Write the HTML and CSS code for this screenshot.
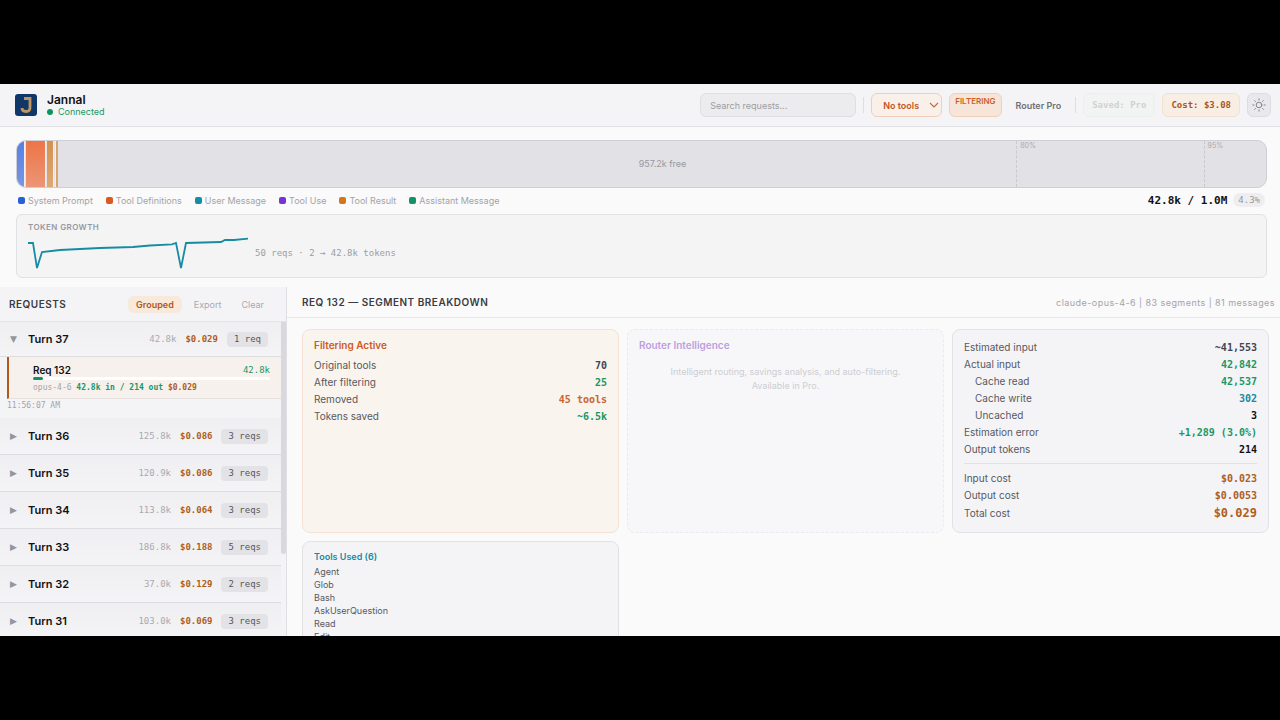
FILE: index.html
```html
<!DOCTYPE html>
<html lang="en">
<head>
  <meta charset="UTF-8" />
  <meta name="viewport" content="width=device-width, initial-scale=1.0"/>
  <title>Jannal</title>
  <link rel="stylesheet" href="styles.css">
</head>
<body>
  <div class="app">
    <header class="topbar">
      <div class="logo">
        <svg width="22" height="22" viewBox="0 0 22 22" aria-hidden="true">
          <rect width="22" height="22" rx="3" fill="#0f3868"/>
          <path d="M9 4.5H15V13.5Q15 17.5 11 17.5Q7 17.5 7 14" fill="none" stroke="#c09560" stroke-width="2.8"/>
        </svg>
      </div>
      <div class="brand">
        <h1>Jannal</h1>
        <div class="status"><span class="dot"></span>Connected</div>
      </div>

      <div class="toolbar">
        <input type="text" class="search" placeholder="Search requests..." aria-label="Search requests" />
        <span class="divider"></span>
        <div class="select-wrap">
          <select class="tool-select" aria-label="Tool filter">
            <option>No tools</option>
          </select>
          <svg class="chevron" width="10" height="6" viewBox="0 0 10 6" aria-hidden="true"><path d="M1 1l4 4 4-4" fill="none" stroke="#c2663c" stroke-width="1.1"/></svg>
        </div>
        <button class="filtering">FILTERING</button>
        <button class="router">Router Pro</button>
        <span class="divider"></span>
        <span class="pill saved">Saved: Pro</span>
        <span class="pill cost">Cost: $3.08</span>
        <button class="theme" aria-label="Toggle theme">
          <svg width="14" height="14" viewBox="0 0 14 14" fill="none" stroke="#85858d" stroke-width="1" stroke-linecap="round">
            <circle cx="7" cy="7" r="2.8"/>
            <path d="M7 .8v1.2M7 12v1.2M.8 7H2M12 7h1.2M2.6 2.6l.9.9M10.5 10.5l.9.9M2.6 11.4l.9-.9M10.5 3.5l.9-.9"/>
          </svg>
        </button>
      </div>
    </header>

    <section class="overview">
      <div class="context-bar">
        <div class="seg seg-system"></div>
        <div class="seg seg-defs"></div>
        <div class="seg seg-result"></div>
        <div class="seg seg-small"></div>
        <div class="free">957.2k free</div>
        <span class="mark mark-80">80%</span>
        <span class="mark mark-95">95%</span>
      </div>

      <div class="legend-row">
        <ul class="legend">
          <li><i class="blue"></i>System Prompt</li>
          <li><i class="orange"></i>Tool Definitions</li>
          <li><i class="teal"></i>User Message</li>
          <li><i class="purple"></i>Tool Use</li>
          <li><i class="amber"></i>Tool Result</li>
          <li><i class="green"></i>Assistant Message</li>
        </ul>
        <div class="usage">42.8k / 1.0M <span class="percent">4.3%</span></div>
      </div>

      <div class="growth">
        <h2>TOKEN GROWTH</h2>
        <div class="growth-row">
          <svg width="220" height="34" viewBox="0 0 220 34" aria-hidden="true">
            <polyline points="0,7 5,7 9,32 14,16 32,14 72,12 105,11 122,9.5 144,8.3 148,7 153,32 158,7 193,6 197,4 206,4 220,2.7" fill="none" stroke="#178ba3" stroke-width="1.8"/>
          </svg>
          <span>50 reqs · 2 → 42.8k tokens</span>
        </div>
      </div>
    </section>

    <main class="main">
      <aside class="sidebar">
        <div class="sidebar-head">
          <h2>REQUESTS</h2>
          <button class="tab active">Grouped</button>
          <button class="tab">Export</button>
          <button class="tab">Clear</button>
        </div>
        <div class="scroller">
          <div class="turns">
            <div class="turn open">
              <span class="arrow">▼</span><span class="name">Turn 37</span>
              <span class="tokens">42.8k</span><span class="price">$0.029</span><span class="count">1 req</span>
            </div>
            <div class="req">
              <div class="req-top"><span>Req 132</span><span class="req-tokens">42.8k</span></div>
              <div class="meter"><div class="meter-fill"></div></div>
              <div class="req-meta">opus-4-6 <b class="green-text">42.8k in / 214 out</b> <b class="cost-text">$0.029</b></div>
            </div>
            <div class="time">11:56:07 AM</div>
            <div class="turn">
              <span class="arrow">▶</span><span class="name">Turn 36</span>
              <span class="tokens">125.8k</span><span class="price">$0.086</span><span class="count">3 reqs</span>
            </div>
            <div class="turn">
              <span class="arrow">▶</span><span class="name">Turn 35</span>
              <span class="tokens">120.9k</span><span class="price">$0.086</span><span class="count">3 reqs</span>
            </div>
            <div class="turn">
              <span class="arrow">▶</span><span class="name">Turn 34</span>
              <span class="tokens">113.8k</span><span class="price">$0.064</span><span class="count">3 reqs</span>
            </div>
            <div class="turn">
              <span class="arrow">▶</span><span class="name">Turn 33</span>
              <span class="tokens">186.8k</span><span class="price">$0.188</span><span class="count">5 reqs</span>
            </div>
            <div class="turn">
              <span class="arrow">▶</span><span class="name">Turn 32</span>
              <span class="tokens">37.0k</span><span class="price">$0.129</span><span class="count">2 reqs</span>
            </div>
            <div class="turn">
              <span class="arrow">▶</span><span class="name">Turn 31</span>
              <span class="tokens">103.0k</span><span class="price">$0.069</span><span class="count">3 reqs</span>
            </div>
          </div>
          <div class="scrollbar"><div class="thumb"></div></div>
        </div>
      </aside>

      <section class="detail">
        <div class="detail-head">
          <h2>REQ 132 — SEGMENT BREAKDOWN</h2>
          <span>claude-opus-4-6 | 83 segments | 81 messages</span>
        </div>
        <div class="cards">
          <div class="card card-filter">
            <h3>Filtering Active</h3>
            <dl>
              <div><dt>Original tools</dt><dd class="gray-text">70</dd></div>
              <div><dt>After filtering</dt><dd class="green-text">25</dd></div>
              <div><dt>Removed</dt><dd class="orange-text">45 tools</dd></div>
              <div><dt>Tokens saved</dt><dd class="green-text">~6.5k</dd></div>
            </dl>
          </div>

          <div class="card card-router">
            <h3>Router Intelligence</h3>
            <p>Intelligent routing, savings analysis, and auto-filtering.<br>Available in Pro.</p>
          </div>

          <div class="card card-stats">
            <dl>
              <div><dt>Estimated input</dt><dd class="gray-text">~41,553</dd></div>
              <div><dt>Actual input</dt><dd class="green-text">42,842</dd></div>
              <div class="sub"><dt>Cache read</dt><dd class="green-text">42,537</dd></div>
              <div class="sub"><dt>Cache write</dt><dd class="teal-text">302</dd></div>
              <div class="sub"><dt>Uncached</dt><dd>3</dd></div>
              <div><dt>Estimation error</dt><dd class="green-text">+1,289 (3.0%)</dd></div>
              <div><dt>Output tokens</dt><dd>214</dd></div>
            </dl>
            <dl class="costs">
              <div><dt>Input cost</dt><dd class="cost-text">$0.023</dd></div>
              <div><dt>Output cost</dt><dd class="cost-text">$0.0053</dd></div>
              <div class="total"><dt>Total cost</dt><dd class="cost-text">$0.029</dd></div>
            </dl>
          </div>

          <div class="card card-tools">
            <h3>Tools Used (6)</h3>
            <ul>
              <li>Agent</li>
              <li>Glob</li>
              <li>Bash</li>
              <li>AskUserQuestion</li>
              <li>Read</li>
              <li>Edit</li>
            </ul>
          </div>
        </div>
      </section>
    </main>
  </div>
</body>
</html>
```
FILE: styles.css
```css
* {
  box-sizing: border-box;
}

body {
  margin: 0;
  height: 100vh;
  padding: 84px 0;
  background: #000;
  font-family: Inter, "Liberation Sans", sans-serif;
  font-size: 10px;
  color: #111114;
}

h1, h2, h3, p, ul, dl, dd {
  margin: 0;
  padding: 0;
}

ul {
  list-style: none;
}

button, input, select {
  font-family: inherit;
  font-size: 9px;
}

.app {
  height: 100%;
  display: flex;
  flex-direction: column;
  overflow: hidden;
  background: #fafafb;
}

/* top bar */
.topbar {
  display: flex;
  align-items: center;
  flex-shrink: 0;
  height: 43px;
  padding: 0 9px 0 15px;
  background: #f4f4f6;
  border-bottom: 1px solid #e1e0e4;
}

.logo {
  height: 22px;
}

.brand {
  margin-left: 10px;
}

.brand h1 {
  font-size: 12px;
  line-height: 14px;
  font-weight: 600;
}

.status {
  display: flex;
  align-items: center;
  gap: 5px;
  font-size: 9px;
  line-height: 10px;
  color: #1b9765;
}

.dot {
  width: 6px;
  height: 6px;
  border-radius: 50%;
  background: #0d9465;
}

.toolbar {
  display: flex;
  align-items: center;
  gap: 7px;
  margin-left: auto;
}

.search {
  width: 156px;
  height: 24px;
  padding: 0 9px;
  border: 1px solid #dfdfe3;
  border-radius: 6px;
  background: #ececee;
}

.search::placeholder {
  color: #9d9da3;
}

.divider {
  width: 1px;
  height: 16px;
  background: #dedee2;
}

.select-wrap {
  position: relative;
  height: 24px;
}

.tool-select {
  appearance: none;
  width: 71px;
  height: 24px;
  padding: 0 11px;
  border: 1px solid #efcfb9;
  border-radius: 6px;
  background: #f9f0e9;
  color: #c2551f;
  font-weight: 600;
}

.chevron {
  position: absolute;
  right: 3px;
  top: 9px;
  pointer-events: none;
}

.filtering {
  display: flex;
  align-items: flex-start;
  height: 24px;
  padding: 2px 5px;
  border: 1px solid #efd0bd;
  border-radius: 6px;
  background: #f8e5da;
  color: #cc5f29;
  font-size: 8px;
  line-height: 10px;
  font-weight: 600;
}

.router {
  padding: 0 7px;
  border: 0;
  background: none;
  color: #6f6f76;
  font-weight: 600;
}

.pill {
  height: 24px;
  padding: 0 8px;
  border: 1px solid;
  border-radius: 6px;
  font: bold 9px/22px "DejaVu Sans Mono", monospace;
}

.saved {
  border-color: #ebefed;
  background: #f1f4f3;
  color: #cfd2d1;
}

.cost {
  border-color: #f1e1d0;
  background: #f8eee4;
  color: #a9551c;
}

.theme {
  display: flex;
  align-items: center;
  justify-content: center;
  width: 24px;
  height: 24px;
  padding: 0;
  border: 1px solid #dcdce1;
  border-radius: 6px;
  background: #e9e9ed;
}

/* context window usage */
.overview {
  flex-shrink: 0;
  padding: 13px 13px 9px 16px;
}

.context-bar {
  position: relative;
  display: flex;
  gap: 1px;
  height: 48px;
  border: 1px solid #cfced4;
  border-radius: 10px;
  overflow: hidden;
  background: #e2e1e6;
}

.seg {
  flex-shrink: 0;
  border-right: 1px solid #f4eeee;
}

.seg-system {
  width: 8px;
  background: linear-gradient(#5580e2, #7997e2);
}

.seg-defs {
  width: 20px;
  background: linear-gradient(#ec7547, #ec9576);
}

.seg-result {
  width: 7px;
  background: linear-gradient(#d59050, #dfa974);
}

.seg-small {
  width: 3px;
  border: 0;
  border-left: 1px solid #f4eeee;
  background: #dca36d;
}

.free {
  flex: 1;
  text-align: center;
  font-size: 9px;
  line-height: 46px;
  color: #98989f;
}

.mark {
  position: absolute;
  top: 0;
  bottom: 0;
  padding: 1px 3px;
  border-left: 1px dashed #c9c9ce;
  font-size: 7px;
  line-height: 8px;
  color: #a9a9af;
}

.mark-80 {
  left: 80%;
}

.mark-95 {
  left: 95%;
}

.legend-row {
  display: flex;
  align-items: center;
  justify-content: space-between;
  height: 24px;
  margin-bottom: 2px;
  padding: 0 2px;
}

.legend {
  display: flex;
  gap: 13px;
  font-size: 9px;
  color: #a3a3a9;
}

.legend li {
  display: flex;
  align-items: center;
  gap: 3px;
}

.legend i {
  width: 7px;
  height: 7px;
  border-radius: 2px;
}

.blue { background: #2861d5; }
.orange { background: #d9591f; }
.teal { background: #138ea6; }
.purple { background: #7435d2; }
.amber { background: #cf781c; }
.green { background: #129365; }

.usage {
  display: flex;
  align-items: center;
  gap: 6px;
  font: bold 11px "DejaVu Sans Mono", monospace;
}

.percent {
  padding: 0 5px;
  border-radius: 7px;
  background: #eeeef1;
  font-size: 9px;
  line-height: 14px;
  font-weight: normal;
  color: #97979d;
}

.growth {
  height: 64px;
  padding: 7px 11px;
  border: 1px solid #e1e1e5;
  border-radius: 6px;
  background: #f4f4f5;
}

.growth h2 {
  font-size: 8px;
  line-height: 10px;
  font-weight: 600;
  letter-spacing: 0.05em;
  color: #98989f;
}

.growth-row {
  display: flex;
  align-items: center;
  gap: 7px;
  margin-top: 4px;
  font: 9px "DejaVu Sans Mono", monospace;
  color: #9d9da3;
}

/* requests list */
.main {
  display: flex;
  flex: 1;
  min-height: 0;
}

.sidebar {
  display: flex;
  flex-direction: column;
  width: 287px;
  border-right: 1px solid #dfdfe4;
  background: #f4f4f6;
}

.sidebar-head {
  display: flex;
  align-items: center;
  flex-shrink: 0;
  height: 35px;
  padding: 0 14px 0 9px;
  border-bottom: 1px solid #e5e5e9;
}

.sidebar-head h2,
.detail-head h2 {
  font-size: 10px;
  font-weight: 600;
  letter-spacing: 0.05em;
  color: #3b3b42;
}

.sidebar-head h2 {
  margin-right: auto;
}

.tab {
  height: 17px;
  padding: 0 8px;
  margin-left: 4px;
  border: 0;
  border-radius: 6px;
  background: none;
  color: #a9a9af;
}

.tab.active {
  background: #f8e9da;
  color: #b3581a;
  font-weight: 600;
}

.scroller {
  display: flex;
  flex: 1;
  min-height: 0;
}

.turns {
  flex: 1;
  overflow: hidden;
}

.scrollbar {
  width: 5px;
}

.thumb {
  height: 74%;
  border-radius: 0 0 3px 3px;
  background: #d9d9dd;
}

.turn {
  display: flex;
  align-items: center;
  height: 37px;
  padding: 0 13px 0 10px;
  border-bottom: 1px solid #dcdce1;
  background: linear-gradient(#efeff1, #f4f4f6);
}

.turn.open {
  height: 35px;
}

.arrow {
  width: 18px;
  font-family: "DejaVu Sans", sans-serif;
  font-size: 9px;
  color: #95959b;
}

.name {
  margin-right: auto;
  font-size: 11px;
  font-weight: 600;
}

.tokens, .price, .count {
  font: 9px "DejaVu Sans Mono", monospace;
}

.tokens {
  color: #a9a9af;
}

.price {
  margin: 0 9px;
  font-weight: bold;
  color: #b05d20;
}

.count {
  padding: 0 7px;
  border-radius: 4px;
  background: #e3e3e7;
  line-height: 15px;
  color: #55555b;
}

.req {
  height: 42px;
  margin-left: 7px;
  padding: 6px 11px 0 24px;
  border-left: 2px solid #b3581a;
  border-bottom: 1px solid #e6e1df;
  background: #f6f1ed;
}

.req-top {
  display: flex;
  justify-content: space-between;
  font-size: 10px;
  line-height: 14px;
  font-weight: 600;
}

.req-tokens {
  font: 9px/14px "DejaVu Sans Mono", monospace;
  color: #1b9765;
}

.meter {
  height: 3px;
  border-radius: 2px;
  background: #fff;
}

.meter-fill {
  width: 4.3%;
  height: 3px;
  border-radius: 2px;
  background: #139164;
}

.req-meta {
  padding-top: 2px;
  font: 8px/11px "DejaVu Sans Mono", monospace;
  color: #a3a3a9;
}

.time {
  height: 19px;
  padding-left: 7px;
  font: 8px/14px "DejaVu Sans Mono", monospace;
  color: #a3a3a9;
}

/* segment breakdown */
.detail {
  flex: 1;
  min-width: 0;
  overflow: hidden;
}

.detail-head {
  display: flex;
  align-items: center;
  justify-content: space-between;
  height: 31px;
  padding: 0 5px 0 15px;
  border-bottom: 1px solid #e8e8eb;
}

.detail-head span {
  font-size: 9px;
  letter-spacing: 0.05em;
  color: #a3a3a9;
}

.cards {
  display: grid;
  grid-template-columns: repeat(3, 1fr);
  gap: 8px;
  padding: 11px 11px 11px 15px;
}

.card {
  padding: 8px 11px;
  border: 1px solid #e1e1e6;
  border-radius: 8px;
  background: #f4f4f7;
}

.card h3 {
  font-size: 10px;
  line-height: 15px;
  font-weight: 600;
}

.card-filter {
  border-color: #f5e2d4;
  background: #f9f4ee;
}

.card-filter h3 {
  margin-bottom: 4px;
  color: #cd5a21;
}

.card-router {
  border: 1px dashed #ebebef;
  background: #f7f7f9;
}

.card-router h3 {
  color: #bd9fe0;
}

.card-router p {
  margin-top: 12px;
  text-align: center;
  font-size: 9px;
  line-height: 14px;
  color: #cdcdd2;
}

.card dl div {
  display: flex;
  justify-content: space-between;
  line-height: 17px;
  color: #58585f;
}

.card dd {
  font-family: "DejaVu Sans Mono", monospace;
  font-weight: bold;
  color: #111114;
}

.card-stats {
  padding: 9px 11px;
}

.card .sub dt {
  padding-left: 11px;
}

.card .costs {
  margin-top: 5px;
  padding-top: 6px;
  border-top: 1px solid #e1e1e5;
}

.card dl .total {
  line-height: 19px;
}

.total dd {
  font-size: 12px;
}

.card-tools {
  padding-top: 7px;
}

.card-tools h3 {
  font-size: 9px;
  color: #178ba3;
}

.card-tools ul {
  margin-top: 1px;
  font-size: 9px;
  line-height: 13px;
  color: #58585f;
}

.card .gray-text { color: #45454b; }
.card .teal-text { color: #178ba3; }
.card .orange-text { color: #cc6530; }
.green-text, .card .green-text { color: #1b9765; }
.cost-text, .card .cost-text { color: #b05d20; }
```
